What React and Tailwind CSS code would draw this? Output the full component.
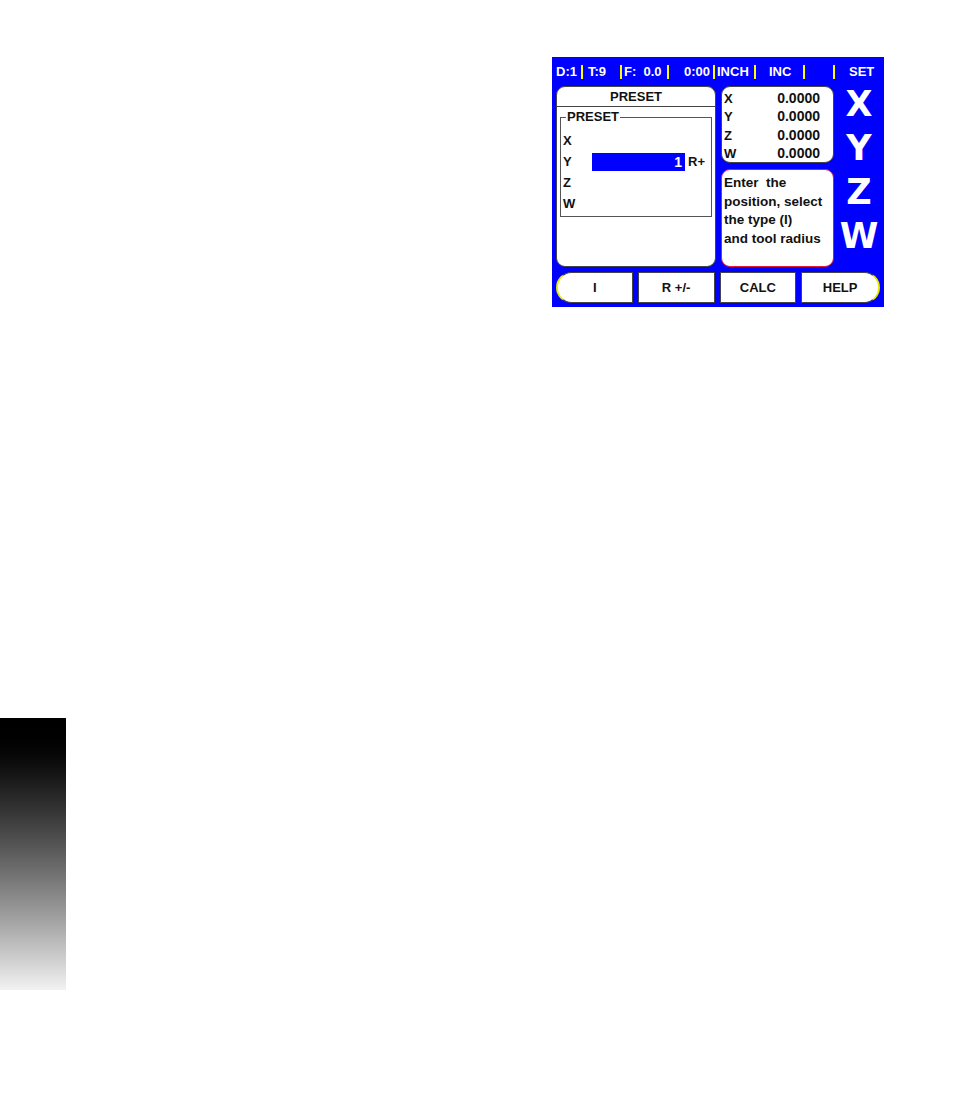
// App.jsx
const DRO = { fontFamily: '"Liberation Sans", Arial, sans-serif' };

function Sep() {
  return <span className="block w-[2px] h-[14px] bg-[#ffff00]" />;
}

function StatusBar() {
  return (
    <div className="flex items-center h-[29px] text-white font-bold text-[13px] leading-none">
      <span className="w-[29px] pl-[4px]">D:1</span>
      <Sep />
      <span className="w-[37px] pl-[5px]">T:9</span>
      <Sep />
      <span className="w-[45px] pl-[2px] whitespace-pre">F:  0.0</span>
      <Sep />
      <span className="w-[44px] pr-[3px] text-right">0:00</span>
      <Sep />
      <span className="w-[39px] pl-[2px]">INCH</span>
      <Sep />
      <span className="w-[47px] pl-[13px]">INC</span>
      <Sep />
      <span className="w-[28px]" />
      <Sep />
      <span className="w-[49px] pl-[14px]">SET</span>
    </div>
  );
}

function PresetPanel() {
  const rows = ["X", "Y", "Z", "W"];
  return (
    <div className="w-[160px] h-[181px] bg-white rounded-[9px] border border-[#444] flex flex-col">
      <div className="h-[20px] border-b border-[#444] flex items-center justify-center font-bold text-[13px]">
        PRESET
      </div>
      <fieldset className="mx-[3px] mt-[3px] h-[107px] border border-[#555] px-[2px]">
        <legend className="ml-[3px] px-[1px] font-bold text-[13px] leading-[14px]">PRESET</legend>
        <div className="flex flex-col pt-[6px]">
          {rows.map((r) => (
            <div key={r} className="flex items-center h-[21px] font-bold text-[13px]">
              <span className="w-[29px]">{r}</span>
              {r === "Y" ? (
                <>
                  <span className="w-[93px] h-[18px] bg-[#0000ff] text-white text-right pr-[3px] leading-[18px] text-[14px]">1</span>
                  <span className="ml-[3px]">R+</span>
                </>
              ) : null}
            </div>
          ))}
        </div>
      </fieldset>
    </div>
  );
}

function AxisPanel() {
  const rows = ["X", "Y", "Z", "W"];
  return (
    <div className="h-[77px] bg-white rounded-[9px] border border-[#444] pt-[2px] px-[2px]">
      {rows.map((r) => (
        <div key={r} className="flex justify-between items-center h-[18.5px] font-bold text-[14px] pr-[11px]">
          <span className="text-[13px]">{r}</span>
          <span>0.0000</span>
        </div>
      ))}
    </div>
  );
}

function HelpPanel() {
  return (
    <div className="mt-[6px] h-[99px] bg-white rounded-[9px] border border-[#e8163a] px-[2px] pt-[4px] font-bold text-[13.5px] leading-[18.7px] whitespace-nowrap">
      <div>Enter&nbsp; the</div>
      <div>position, select</div>
      <div>the type (I)</div>
      <div>and tool radius</div>
    </div>
  );
}

function AxisLetters() {
  return (
    <div
      className="flex-1 flex flex-col items-center text-white font-bold text-[35px] leading-[44px] -mt-[4px]"
      style={{ fontFamily: '"DejaVu Sans", sans-serif' }}
    >
      <span>X</span>
      <span>Y</span>
      <span>Z</span>
      <span>W</span>
    </div>
  );
}

function SoftKeys() {
  const base = "h-[31px] bg-white border border-[#444] flex items-center justify-center font-bold text-[13px]";
  return (
    <div className="flex gap-[5px] mt-[5px] px-[4px]">
      <div className={`${base} w-[77px] rounded-l-full border-l-2 border-l-[#e8e800]`}>I</div>
      <div className={`${base} w-[77px]`}>R +/-</div>
      <div className={`${base} w-[77px]`}>CALC</div>
      <div className={`${base} w-[79px] rounded-r-full border-r-2 border-r-[#e8e800]`}>HELP</div>
    </div>
  );
}

function Screen() {
  return (
    <div className="w-[332px] h-[250px] bg-[#0000ff] flex flex-col text-[#111]" style={DRO}>
      <StatusBar />
      <div className="flex pl-[4px] h-[181px]">
        <PresetPanel />
        <div className="ml-[5px] w-[113px] flex flex-col">
          <AxisPanel />
          <HelpPanel />
        </div>
        <AxisLetters />
      </div>
      <SoftKeys />
    </div>
  );
}

export default function App() {
  return (
    <div className="w-[954px] min-h-[1096px] bg-white">
      <div className="pt-[57px] pl-[552px]">
        <Screen />
      </div>
      <div className="mt-[411px] w-[66px] h-[272px] bg-linear-to-b from-black to-[#f2f2f2]" />
    </div>
  );
}
